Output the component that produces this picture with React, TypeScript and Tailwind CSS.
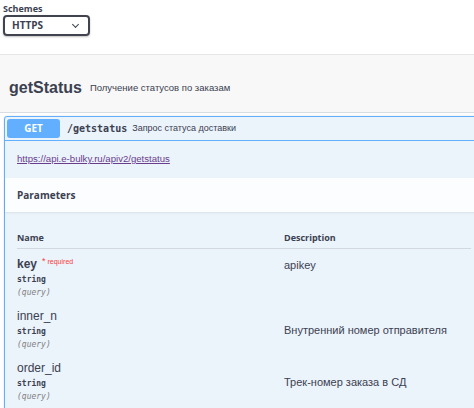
const params = [
  { name: "key", required: true, desc: "apikey", center: false },
  { name: "inner_n", required: false, desc: "Внутренний номер отправителя", center: true },
  { name: "order_id", required: false, desc: "Трек-номер заказа в СД", center: true },
];

const App = () => {
  return (
    <div className="w-[474px] h-[408px] overflow-hidden bg-white text-[#3b4151] font-['Liberation_Sans',sans-serif]">
      {/* Schemes */}
      <div className="h-[54px] pl-[3px] pt-[3px]">
        <div className="font-['Open_Sans',sans-serif] text-[9px] font-bold leading-[11px]">Schemes</div>
        <div className="mt-[1px] w-[87px] h-[21px] border-2 border-[#41444e] rounded-[4px] flex items-center justify-between pl-[7px] pr-[10px] shadow-[0_1px_2px_rgba(0,0,0,0.25)]">
          <span className="font-['Open_Sans',sans-serif] text-[10px] font-bold">HTTPS</span>
          <span className="block w-[5px] h-[5px] border-r-[1.5px] border-b-[1.5px] border-[#3b4151] rotate-45 -mt-[3px]" />
        </div>
      </div>

      {/* Tag */}
      <div className="border-t border-[#e6e6e6] bg-[#f8f8f8] h-[59px] border-b border-b-[#d9dce2] flex items-end pb-[13px] pl-[9px] gap-[8px]">
        <span className="text-[16px] font-bold leading-[22px] text-[#3b4151]">getStatus</span>
        <span className="text-[9.5px] leading-[14px] mb-[4px]">Получение статусов по заказам</span>
      </div>

      {/* Operation */}
      <div className="mt-[3px] ml-[4px] -mr-[10px] border border-[#61affe] bg-[#ebf3fb] rounded-[3px] shadow-[0_0_2px_rgba(0,0,0,0.15)]">
        <div className="h-[24px] flex items-center px-[2px] border-b border-[#61affe]">
          <div className="w-[53px] h-[19px] bg-[#61affe] rounded-[3px] flex items-center justify-center text-white text-[10px] font-bold font-['Open_Sans',sans-serif]">
            GET
          </div>
          <span className="ml-[7px] font-['DejaVu_Sans_Mono',monospace] text-[10px] font-bold">/getstatus</span>
          <span className="ml-[5px] text-[9px]">Запрос статуса доставки</span>
        </div>

        <div className="h-[37px] flex items-center pl-[12px]">
          <a className="text-[9.6px] text-[#6a3e8c] underline" href="#">
            https://api.e-bulky.ru/apiv2/getstatus
          </a>
        </div>

        <div className="h-[34px] bg-white/80 shadow-[0_1px_2px_rgba(0,0,0,0.08)] flex items-center pl-[12px]">
          <span className="font-['Open_Sans',sans-serif] text-[10px] font-bold">Parameters</span>
        </div>

        <div className="px-[12px] pt-[17px]">
          <div className="flex h-[20px] items-center border-b border-[#d3d8e0] font-['Open_Sans',sans-serif] text-[9px] font-bold pb-[1px]">
            <div className="w-[267px]">Name</div>
            <div>Description</div>
          </div>

          {params.map((p, i) => (
            <div key={p.name} className={`flex ${i === 0 ? "pt-[8px]" : "pt-[10px]"} ${p.center ? "items-center" : "items-start"}`}>
              <div className="w-[267px] flex flex-col">
                <div className="flex items-start">
                  <span className={`text-[12px] leading-[15px] ${p.required ? "font-bold" : ""}`}>{p.name}</span>
                  {p.required && (
                    <span className="ml-[5px] text-[7px] leading-[9px] text-[#f93e3e]">
                      <span className="text-[9px]">*</span> required
                    </span>
                  )}
                </div>
                <span className="font-['DejaVu_Sans_Mono',monospace] text-[8px] leading-[13px] font-semibold text-[#3b4151] mt-[1px]">string</span>
                <span className="font-['DejaVu_Sans_Mono',monospace] text-[8px] leading-[13px] italic text-[#808080]">(query)</span>
              </div>
              <div className={`text-[11px] leading-[15px] ${p.center ? "" : "pt-[1px]"}`}>{p.desc}</div>
            </div>
          ))}
          <div className="h-[40px]" />
        </div>
      </div>
    </div>
  );
};

export default App;
